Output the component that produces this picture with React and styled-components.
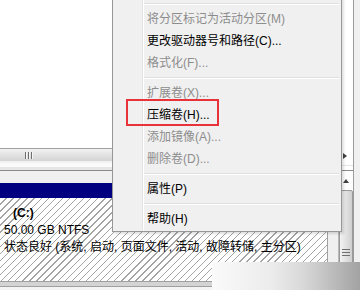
import styled, { createGlobalStyle } from 'styled-components';

const GlobalStyle = createGlobalStyle`
  html, body {
    margin: 0;
    padding: 0;
    background: #fff;
  }
  body {
    font-family: "Liberation Sans", "Noto Sans CJK SC", sans-serif;
    font-size: 12px;
  }
`;

const Screen = styled.div`
  position: relative;
  width: 360px;
  height: 290px;
  overflow: hidden;
  background: #f0f0f0;
  display: flex;
  flex-direction: column;
`;

const Row = styled.div`
  display: flex;
  height: ${p => p.$h}px;
  flex-shrink: 0;
`;

const ListView = styled.div`
  flex: 1;
  background: #fff;
`;

const SideEdge = styled.div`
  width: 6px;
  border-left: 1px solid #9c9c9c;
  background: #f0f0f0;
`;

const HTrack = styled.div`
  flex: 1;
  display: flex;
  flex-direction: column;
  border-top: 1px solid #a0a0a0;
  border-bottom: 1px solid #8a8a8a;
`;

const HThumb = styled.div`
  height: 12px;
  display: flex;
  align-items: center;
  padding-left: 25px;
  background: linear-gradient(to bottom, #f2f2f2, #e2e2e2 50%, #d4d4d4);
`;

const Grip = styled.span`
  width: ${p => (p.$vertical ? 8 : 8)}px;
  height: ${p => (p.$vertical ? 7 : 7)}px;
  background: ${p =>
    p.$vertical
      ? 'repeating-linear-gradient(180deg, #6e6e6e 0 1px, transparent 1px 3px)'
      : 'repeating-linear-gradient(90deg, #6e6e6e 0 1px, #f4f4f4 1px 2px, transparent 2px 3px)'};
`;

const HBase = styled.div`
  flex: 1;
  background: linear-gradient(to bottom, #f2f2f2 0 2px, #fbfbfb 2px 6px, #e6e6e6 6px);
`;

const ArrowBtn = styled.div`
  width: 17px;
  display: flex;
  align-items: flex-start;
  justify-content: center;
  padding-top: 5px;
  box-sizing: border-box;
  background: linear-gradient(to bottom, #fff 0 17px, #e4e4e4 17px 18px, #fff 18px);
  border-bottom: 1px solid #8a8a8a;
`;

const Triangle = styled.span`
  width: 0;
  height: 0;
  ${p =>
    p.$dir === 'up'
      ? `border-left: 3px solid transparent;
         border-right: 3px solid transparent;
         border-bottom: 4px solid #404040;`
      : `border-top: 3px solid transparent;
         border-bottom: 3px solid transparent;
         border-left: 4px solid #404040;`}
`;

const Lower = styled.div`
  display: flex;
  height: 110px;
  flex-shrink: 0;
`;

const DiskColumn = styled.div`
  flex: 1;
  display: flex;
  flex-direction: column;
`;

const Spacer = styled.div`
  height: ${p => p.$h || 0}px;
  width: ${p => (p.$w ? `${p.$w}px` : 'auto')};
  flex-shrink: 0;
  background: #f0f0f0;
`;

const VolumeHeader = styled.div`
  height: 15px;
  background: #000080;
`;

const Hatch = styled.div`
  flex: 1;
  padding: 7px 0 0 4px;
  line-height: 17px;
  color: #000;
  white-space: nowrap;
  background: repeating-linear-gradient(135deg, #fff 0 4px, #a4a4a4 4px 5px);
`;

const VolumeLine = styled.div`
  font-weight: ${p => (p.$bold ? 700 : 400)};
  padding-left: ${p => p.$indent || 0}px;
`;

const VColumn = styled.div`
  width: 32px;
  border-left: 1px solid #a0a0a0;
  display: flex;
`;

const VBar = styled.div`
  width: 15px;
  display: flex;
  flex-direction: column;
  background: #fdfdfd;
  border-left: 1px solid #b8b8b8;
  box-sizing: border-box;
`;

const VArrow = styled.div`
  height: 19px;
  display: flex;
  align-items: center;
  justify-content: center;
`;

const VThumb = styled.div`
  flex: 1;
  display: flex;
  justify-content: center;
  padding-top: 58px;
  border: 1px solid #9a9a9a;
  border-radius: 2px;
  background: linear-gradient(to right, #f2f2f2, #e0e0e0 55%, #cfcfcf);
`;

const BottomStrip = styled.div`
  flex: 1;
  border-top: 1px solid #a0a0a0;
  background: linear-gradient(to bottom, #d4d4d4 0 4px, #a0a0a0 4px 5px, #f4f4f4 5px);
`;

const Menu = styled.div`
  position: absolute;
  left: 112px;
  top: -3px;
  width: 230px;
  box-sizing: border-box;
  padding: 2px 2px 1px;
  border: 1px solid #979797;
  background: linear-gradient(to right, #f0f0f0 29px, #e2e3e3 29px 30px, #fff 30px 31px, #f0f0f0 31px);
  box-shadow: 2px 2px 2px rgba(0, 0, 0, 0.12);
`;

const MenuItem = styled.div`
  height: 22px;
  line-height: 22px;
  padding-left: 32px;
  color: ${p => (p.$disabled ? '#8d8d8d' : '#000')};
  white-space: nowrap;
`;

const Separator = styled.div`
  height: 8px;
  margin-left: 29px;
  display: flex;
  flex-direction: column;
  justify-content: center;

  &::before {
    content: '';
    height: 1px;
    background: #e0e0e0;
    border-bottom: 1px solid #fff;
  }
`;

const Highlight = styled.div`
  position: absolute;
  left: 126px;
  top: 99px;
  width: 93px;
  height: 27px;
  box-sizing: border-box;
  border: 2px solid #e8333a;
`;

const CornerFade = styled.div`
  position: absolute;
  left: 212px;
  top: 262px;
  right: 0;
  bottom: 0;
  background: linear-gradient(to right, #fafafa 0%, #ececec 40%, #d8d8d8 62%, #a2a2a2 100%);
`;

const menuItems = [
  { sep: true },
  { label: '将分区标记为活动分区(M)', disabled: true },
  { label: '更改驱动器号和路径(C)...' },
  { label: '格式化(F)...', disabled: true },
  { sep: true },
  { label: '扩展卷(X)...', disabled: true },
  { label: '压缩卷(H)...' },
  { label: '添加镜像(A)...', disabled: true },
  { label: '删除卷(D)...', disabled: true },
  { sep: true },
  { label: '属性(P)' },
  { sep: true },
  { label: '帮助(H)' },
];

export default function App() {
  return (
    <>
      <GlobalStyle />
      <Screen>
        <Row $h={148}>
          <ListView />
          <SideEdge />
        </Row>
        <Row $h={23}>
          <HTrack>
            <HThumb>
              <Grip />
            </HThumb>
            <HBase />
          </HTrack>
          <ArrowBtn>
            <Triangle $dir="right" />
          </ArrowBtn>
          <SideEdge />
        </Row>
        <Lower>
          <DiskColumn>
            <Spacer $h={12} />
            <VolumeHeader />
            <Hatch>
              <VolumeLine $bold $indent={9}>(C:)</VolumeLine>
              <VolumeLine>50.00 GB NTFS</VolumeLine>
              <VolumeLine>状态良好 (系统, 启动, 页面文件, 活动, 故障转储, 主分区)</VolumeLine>
            </Hatch>
          </DiskColumn>
          <VColumn>
            <Spacer $w={10} />
            <VBar>
              <VArrow>
                <Triangle $dir="up" />
              </VArrow>
              <VThumb>
                <Grip $vertical />
              </VThumb>
            </VBar>
            <SideEdge />
          </VColumn>
        </Lower>
        <BottomStrip />

        <Menu>
          {menuItems.map((item, i) =>
            item.sep ? (
              <Separator key={i} />
            ) : (
              <MenuItem key={i} $disabled={item.disabled}>
                {item.label}
              </MenuItem>
            )
          )}
        </Menu>
        <Highlight />
        <CornerFade />
      </Screen>
    </>
  );
}
